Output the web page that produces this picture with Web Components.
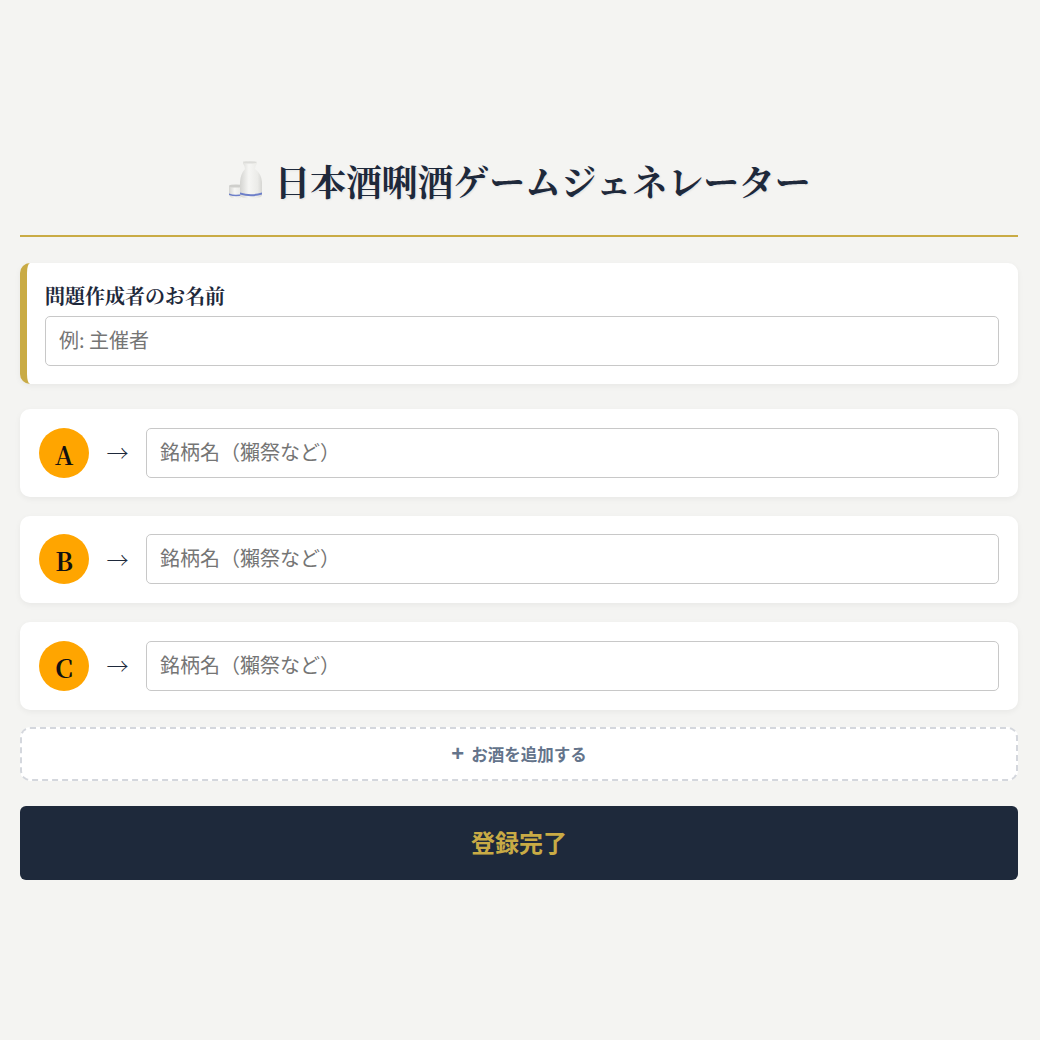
<!DOCTYPE html>
<html lang="ja">
<head>
<meta charset="utf-8">
<title>日本酒唎酒ゲームジェネレーター</title>
<style>
html, body { margin: 0; padding: 0; }
body { background: #f4f4f2; font-family: "Noto Sans CJK JP", "Noto Sans", sans-serif; }
</style>
</head>
<body>
<game-app>
    <page-title>日本酒唎酒ゲームジェネレーター</page-title>
    <author-card label="問題作成者のお名前" placeholder="例: 主催者"></author-card>
    <sake-row letter="A"></sake-row>
    <sake-row letter="B"></sake-row>
    <sake-row letter="C"></sake-row>
    <add-button>お酒を追加する</add-button>
    <submit-button>登録完了</submit-button>
</game-app>

<script>
const SERIF = `"Noto Serif CJK JP", "Noto Serif JP", "Liberation Serif", "Noto Sans CJK JP", serif`;
const SANS = `"Noto Sans CJK JP", "Noto Sans", sans-serif`;

const appTemplate = document.createElement("template");
appTemplate.innerHTML = `
<style>
:host{
    display: flex;
    flex-direction: column;
    padding: 160px 22px 160px 20px;
}
</style>
<slot></slot>
`;

class GameApp extends HTMLElement {
    constructor(){
        super();
        this.attachShadow({mode: "open"});
        this.shadowRoot.appendChild(appTemplate.content.cloneNode(true));
    }
}

const titleTemplate = document.createElement("template");
titleTemplate.innerHTML = `
<style>
:host{
    display: block;
    border-bottom: 2px solid #c9ab45;
    height: 75px;
    margin-bottom: 26px;
    box-sizing: content-box;
}
.title{
    display: flex;
    justify-content: center;
    align-items: center;
    gap: 11px;
    height: 40px;
    font-family: ${SERIF};
    font-size: 35.8px;
    font-weight: 700;
    color: #1e293b;
    text-shadow: 1px 1px 2px rgba(0,0,0,.08);
    white-space: nowrap;
}
svg{ width: 36px; height: 40px; flex: none; }
</style>
<div class="title">
    <svg viewBox="0 0 36 40">
        <defs>
            <linearGradient id="body" x1="0" x2="1" y1="0" y2="0">
                <stop offset="0" stop-color="#d4d4d1"/>
                <stop offset=".4" stop-color="#f6f6f4"/>
                <stop offset=".8" stop-color="#ebebe8"/>
                <stop offset="1" stop-color="#d6d6d3"/>
            </linearGradient>
        </defs>
        <path d="M2 26 Q9 24 16 26 L16 34 Q15.5 38.5 9 38.5 Q2.5 38.5 2 34 Z" fill="url(#body)"/>
        <ellipse cx="9" cy="26" rx="7" ry="1.6" fill="#cfcfcc"/>
        <path d="M2 33.5 Q9 36 16 33.5 L16 35 Q9 37.5 2 35 Z" fill="#6d7fc9"/>
        <path d="M16 1.5 Q23 0 30 1.5 L30 3.5 Q28 6 28 9 Q34.5 14 35 22 L35 35 Q35 38.5 24 38.5 Q13.5 38.5 13 35 L13 22 Q13.5 14 18 9 Q18 6 16 3.5 Z" fill="url(#body)"/>
        <ellipse cx="23" cy="2.4" rx="6.5" ry="1.2" fill="#dcdcd9"/>
        <path d="M13 32.5 Q24 36 35 32.5 L35 34.5 Q24 38 13 34.5 Z" fill="#6d7fc9"/>
    </svg>
    <span><slot></slot></span>
</div>
`;

class PageTitle extends HTMLElement {
    constructor(){
        super();
        this.attachShadow({mode: "open"});
        this.shadowRoot.appendChild(titleTemplate.content.cloneNode(true));
    }
}

const inputStyles = `
input{
    flex: 1;
    display: block;
    width: 100%;
    min-width: 0;
    height: 50px;
    box-sizing: border-box;
    padding: 0 13px 3px;
    border: 1px solid #c8c8c8;
    border-radius: 5px;
    background: #fff;
    font-family: ${SANS};
    font-size: 20px;
    color: #1e293b;
    outline: none;
}
input::placeholder{ color: #757575; opacity: 1; }
`;

const authorTemplate = document.createElement("template");
authorTemplate.innerHTML = `
<style>
:host{
    display: block;
    box-sizing: border-box;
    height: 121px;
    margin-bottom: 25px;
    padding: 19px 19px 0 18px;
    background: #fff;
    border-left: 7px solid #c9ab45;
    border-radius: 10px;
    box-shadow: 0 2px 6px rgba(0,0,0,.05);
}
label{
    display: block;
    height: 34px;
    line-height: 28px;
    font-family: ${SERIF};
    font-size: 20px;
    font-weight: 700;
    color: #1e293b;
}
${inputStyles}
</style>
<label></label>
<input type="text">
`;

class AuthorCard extends HTMLElement {
    constructor(){
        super();
        this.attachShadow({mode: "open"});
        this.shadowRoot.appendChild(authorTemplate.content.cloneNode(true));
    }

    connectedCallback(){
        this.shadowRoot.querySelector("label").textContent = this.getAttribute("label");
        this.shadowRoot.querySelector("input").placeholder = this.getAttribute("placeholder");
    }
}

const rowTemplate = document.createElement("template");
rowTemplate.innerHTML = `
<style>
:host{
    display: flex;
    align-items: center;
    box-sizing: border-box;
    height: 87.5px;
    margin-bottom: 19px;
    padding: 0 19px;
    background: #fff;
    border-radius: 10px;
    box-shadow: 0 2px 6px rgba(0,0,0,.05);
}
.badge{
    flex: none;
    display: flex;
    justify-content: center;
    align-items: center;
    width: 50px;
    height: 50px;
    padding-top: 2px;
    box-sizing: border-box;
    border-radius: 50%;
    background: #ffa500;
    color: #111;
    font-family: ${SERIF};
    font-size: 25px;
    font-weight: 700;
}
.arrow{
    flex: none;
    width: 57px;
    padding-bottom: 2px;
    box-sizing: border-box;
    text-align: center;
    font-family: ${SERIF};
    font-size: 22px;
    color: #1e293b;
}
${inputStyles}
</style>
<div class="badge"></div>
<div class="arrow">→</div>
<input type="text" placeholder="銘柄名（獺祭など）">
`;

class SakeRow extends HTMLElement {
    constructor(){
        super();
        this.attachShadow({mode: "open"});
        this.shadowRoot.appendChild(rowTemplate.content.cloneNode(true));
    }

    connectedCallback(){
        this.shadowRoot.querySelector(".badge").textContent = this.getAttribute("letter");
    }
}

const addTemplate = document.createElement("template");
addTemplate.innerHTML = `
<style>
:host{ display: block; margin: -1.5px 0 25px; }
button{
    display: flex;
    justify-content: center;
    align-items: center;
    gap: 7px;
    width: 100%;
    height: 54px;
    padding: 0;
    box-sizing: border-box;
    background: #fff;
    border: 2px dashed #d4d7dd;
    border-radius: 10px;
    font-family: ${SANS};
    font-size: 16.5px;
    font-weight: 700;
    color: #64748b;
    cursor: pointer;
}
.plus{
    font-family: "Liberation Sans", sans-serif;
    font-size: 22px;
    line-height: 1;
}
</style>
<button><span class="plus">+</span><span><slot></slot></span></button>
`;

class AddButton extends HTMLElement {
    constructor(){
        super();
        this.attachShadow({mode: "open"});
        this.shadowRoot.appendChild(addTemplate.content.cloneNode(true));
    }
}

const submitTemplate = document.createElement("template");
submitTemplate.innerHTML = `
<style>
:host{ display: block; }
button{
    display: block;
    width: 100%;
    height: 74px;
    padding: 0 0 4px;
    background: #1e293b;
    border: none;
    border-radius: 6px;
    font-family: ${SANS};
    font-size: 24px;
    font-weight: 700;
    color: #c9ab45;
    cursor: pointer;
}
</style>
<button><slot></slot></button>
`;

class SubmitButton extends HTMLElement {
    constructor(){
        super();
        this.attachShadow({mode: "open"});
        this.shadowRoot.appendChild(submitTemplate.content.cloneNode(true));
    }
}

customElements.define("game-app", GameApp);
customElements.define("page-title", PageTitle);
customElements.define("author-card", AuthorCard);
customElements.define("sake-row", SakeRow);
customElements.define("add-button", AddButton);
customElements.define("submit-button", SubmitButton);
</script>
</body>
</html>
